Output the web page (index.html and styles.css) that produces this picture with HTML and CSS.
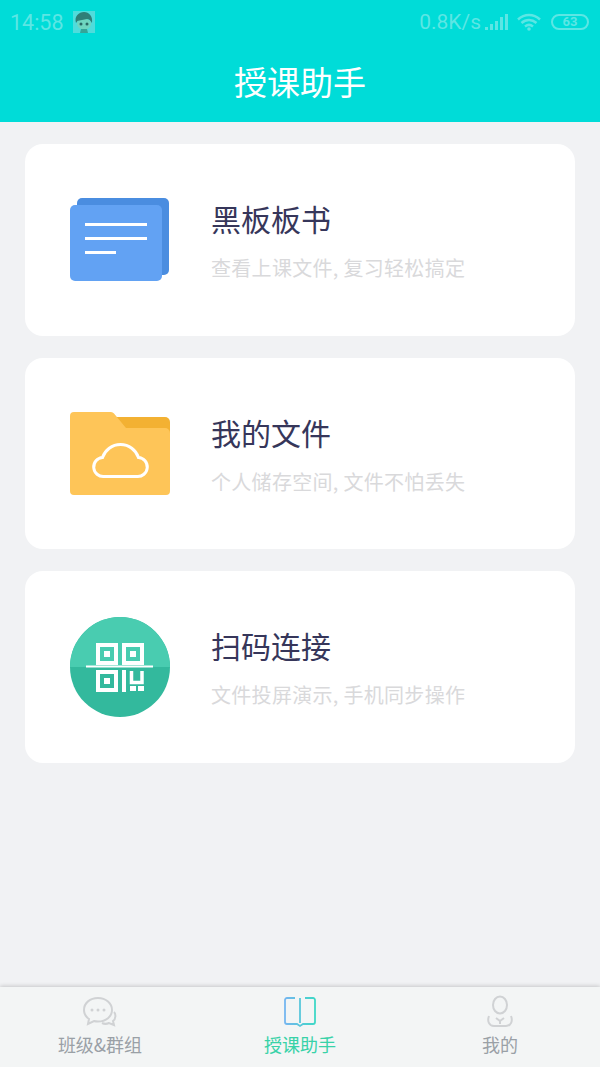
FILE: index.html
```html
<!DOCTYPE html>
<html>
<head>
    <title>授课助手</title>
    <link rel="stylesheet" href="styles.css">
</head>
<body>
    <div class="app">
        <header class="top-bar">
            <div class="status-bar">
                <div class="status-left">
                    <span class="status-time">14:58</span>
                    <svg class="status-avatar" width="22" height="22" viewBox="0 0 22 22">
                        <rect width="22" height="22" fill="#4fdcdc"/>
                        <path d="M3 12C1 5 6 1 11 1s9 4 8 11l-3-4H6z" fill="#2f7f78"/>
                        <ellipse cx="11" cy="13" rx="7" ry="5.500" fill="#6fd6c0"/>
                        <path d="M4 10l3-4h9l2 3-4-1z" fill="#2f7f78"/>
                        <circle cx="8" cy="13" r="1.500" fill="#2a6a66"/>
                        <circle cx="14" cy="13" r="1.500" fill="#2a6a66"/>
                        <path d="M7 22l1-4h6l1 4z" fill="#35a598"/>
                    </svg>
                </div>
                <div class="status-right">
                    <span class="status-speed">0.8K/s</span>
                    <svg width="24" height="18" viewBox="0 0 24 18" class="status-icon">
                        <rect x="0" y="14" width="3" height="3" />
                        <rect x="5" y="11" width="3" height="6" />
                        <rect x="10" y="8" width="3" height="9" />
                        <rect x="15" y="4" width="3" height="13" />
                        <rect x="20" y="1" width="3" height="16" />
                    </svg>
                    <svg width="24" height="18" viewBox="0 0 24 18" class="status-wifi">
                        <path d="M1 6.500C7.500 0.500 16.500 0.500 23 6.500" />
                        <path d="M4.500 10C9 6 15 6 19.500 10" />
                        <path d="M8 13.500C10.500 11.500 13.500 11.500 16 13.500" />
                        <circle cx="12" cy="16" r="1.800" />
                    </svg>
                    <span class="status-battery">63</span>
                </div>
            </div>
            <h1 class="page-title">授课助手</h1>
        </header>

        <main class="card-list">
            <div class="card">
                <svg class="card-icon" width="100" height="100" viewBox="0 0 100 100">
                    <rect x="7" y="8" width="92" height="77" rx="5" fill="#4a8de0"/>
                    <rect x="0" y="15" width="92" height="76" rx="5" fill="#62a2f3"/>
                    <rect x="15" y="33" width="62" height="3" fill="#fff"/>
                    <rect x="15" y="47" width="62" height="3" fill="#fff"/>
                    <rect x="15" y="61" width="31" height="3" fill="#fff"/>
                </svg>
                <div class="card-text">
                    <h2>黑板板书</h2>
                    <p>查看上课文件, 复习轻松搞定</p>
                </div>
            </div>
            <div class="card">
                <svg class="card-icon" width="100" height="100" viewBox="0 0 100 100">
                    <path d="M40 14H95a5 5 0 0 1 5 5V40H40z" fill="#f3b132"/>
                    <path d="M4 9H41a4 4 0 0 1 3 1.500L56 25H95a5 5 0 0 1 5 5V88a4 4 0 0 1-4 4H4a4 4 0 0 1-4-4V13a4 4 0 0 1 4-4z" fill="#fec558"/>
                    <path d="M34 73.500a9.500 9.500 0 0 1-1.500-19C35 47 42 41.500 50.500 41.500S66 47 68.500 54.500a9.500 9.500 0 0 1-1.500 19z" fill="none" stroke="#fff" stroke-width="3"/>
                </svg>
                <div class="card-text">
                    <h2>我的文件</h2>
                    <p>个人储存空间, 文件不怕丢失</p>
                </div>
            </div>
            <div class="card">
                <svg class="card-icon" width="100" height="100" viewBox="0 0 100 100">
                    <circle cx="50" cy="50" r="50" fill="#33b99d"/>
                    <path d="M0 50a50 50 0 0 1 100 0z" fill="#49ccb0"/>
                    <g fill="none" stroke="#fff" stroke-width="4">
                        <rect x="28" y="28" width="18" height="18"/>
                        <rect x="54" y="28" width="18" height="18"/>
                        <rect x="28" y="55" width="18" height="18"/>
                    </g>
                    <path d="M61.500 54v11.500h10.500V54" fill="none" stroke="#fff" stroke-width="3.500"/>
                    <g fill="#fff">
                        <rect x="34" y="34" width="6" height="6"/>
                        <rect x="60" y="34" width="6" height="6"/>
                        <rect x="34" y="61" width="6" height="6"/>
                        <rect x="16" y="48.500" width="67" height="2"/>
                        <rect x="52" y="53" width="4" height="22"/>
                        <rect x="60" y="69" width="6" height="5"/>
                        <rect x="68" y="69" width="6" height="5"/>
                    </g>
                </svg>
                <div class="card-text">
                    <h2>扫码连接</h2>
                    <p>文件投屏演示, 手机同步操作</p>
                </div>
            </div>
        </main>

        <nav class="tab-bar">
            <div class="tab-item">
                <svg width="36" height="32" viewBox="0 0 36 32" fill="none" stroke="#d0d2d4" stroke-width="2">
                    <path d="M16 2C8 2 2 7 2 14c0 4 2 7 5 9l-1 5 6-3c1 .3 3 .5 4 .5 8 0 14-5 14-11.500S24 2 16 2z"/>
                    <path d="M32 16c2 2 2 7-1 9l1 4-5-2c-2 1-5 1-7 0"/>
                    <g fill="#d0d2d4" stroke="none">
                        <circle cx="10" cy="14" r="1.500"/>
                        <circle cx="16" cy="14" r="1.500"/>
                        <circle cx="22" cy="14" r="1.500"/>
                    </g>
                </svg>
                <span>班级&amp;群组</span>
            </div>
            <div class="tab-item tab-active">
                <svg width="32" height="32" viewBox="0 0 32 32" fill="none" stroke-width="1.800">
                    <defs>
                        <linearGradient id="bookGrad" gradientUnits="userSpaceOnUse" x1="1" y1="0" x2="31" y2="0">
                            <stop offset="0" stop-color="#75b6f0"/>
                            <stop offset="1" stop-color="#3ed8c6"/>
                        </linearGradient>
                    </defs>
                    <path d="M11 2H3a2 2 0 0 0-2 2v22a2 2 0 0 0 2 2h10l3 2 3-2h10a2 2 0 0 0 2-2V4a2 2 0 0 0-2-2H21M16 2v25" stroke="url(#bookGrad)"/>
                </svg>
                <span>授课助手</span>
            </div>
            <div class="tab-item">
                <svg width="28" height="33" viewBox="0 0 28 33" fill="none" stroke="#d0d2d4" stroke-width="2">
                    <ellipse cx="14" cy="10" rx="7" ry="8.500"/>
                    <path d="M3 21c-2 5 0 10 5 10h12c5 0 7-5 5-10"/>
                    <path d="M10 23l4 3 4-3M14 26v3"/>
                </svg>
                <span>我的</span>
            </div>
        </nav>
    </div>
</body>
</html>
```

FILE: styles.css
```css
* {
    box-sizing: border-box;
}
html, body {
    margin: 0;
    padding: 0;
}
body {
    font-family: "Noto Sans CJK SC", "Noto Sans", Roboto, sans-serif;
    background-color: #f1f2f4;
}
.app {
    display: flex;
    flex-direction: column;
    width: 600px;
    height: 1067px;
    overflow: hidden;
}
.top-bar {
    height: 122px;
    background-color: #00dcd8;
    color: white;
}
.status-bar {
    display: flex;
    justify-content: space-between;
    align-items: center;
    height: 44px;
    padding: 0 11px 0 10px;
    color: #5ce6e4;
    font-family: Roboto, sans-serif;
    font-size: 21px;
}
.status-left, .status-right {
    display: flex;
    align-items: center;
}
.status-time {
    font-size: 21.500px;
}
.status-avatar {
    margin-left: 9px;
}
.status-icon {
    margin-left: 4px;
    fill: #5ce6e4;
}
.status-wifi {
    margin-left: 8px;
    fill: #5ce6e4;
}
.status-wifi path {
    fill: none;
    stroke: #5ce6e4;
    stroke-width: 2.500;
}
.status-battery {
    width: 38px;
    height: 16px;
    margin-left: 10px;
    border: 2px solid #5ce6e4;
    border-radius: 8px;
    font-size: 13px;
    font-weight: bold;
    line-height: 12px;
    text-align: center;
}
.page-title {
    margin: 0;
    height: 78px;
    font-size: 33px;
    font-weight: 400;
    line-height: 74px;
    text-align: center;
}
.card-list {
    flex: 1;
    display: flex;
    flex-direction: column;
    gap: 22px;
    padding: 22px 25px 0;
}
.card {
    display: flex;
    align-items: center;
    height: 191.500px;
    padding-left: 45px;
    background-color: white;
    border-radius: 18px;
}
.card-icon {
    flex-shrink: 0;
}
.card-text {
    margin-left: 41px;
    padding-top: 2px;
}
.card-text h2 {
    margin: 0;
    color: #36365a;
    font-size: 30px;
    font-weight: 400;
    line-height: 40px;
}
.card-text p {
    margin: 15px 0 0;
    color: #d9d9db;
    font-size: 20px;
    letter-spacing: 0.300px;
    line-height: 30px;
}
.tab-bar {
    display: flex;
    height: 80px;
    background-color: #f3f5f5;
    box-shadow: 0 -1px 4px rgba(0, 0, 0, 0.18);
}
.tab-item {
    flex: 1;
    display: flex;
    flex-direction: column;
    align-items: center;
    justify-content: flex-end;
    padding-bottom: 11px;
    color: #9aa0a6;
    font-size: 18px;
    line-height: 24px;
}
.tab-item svg {
    margin-bottom: 4px;
}
.tab-active {
    color: #38d2a8;
}
```
